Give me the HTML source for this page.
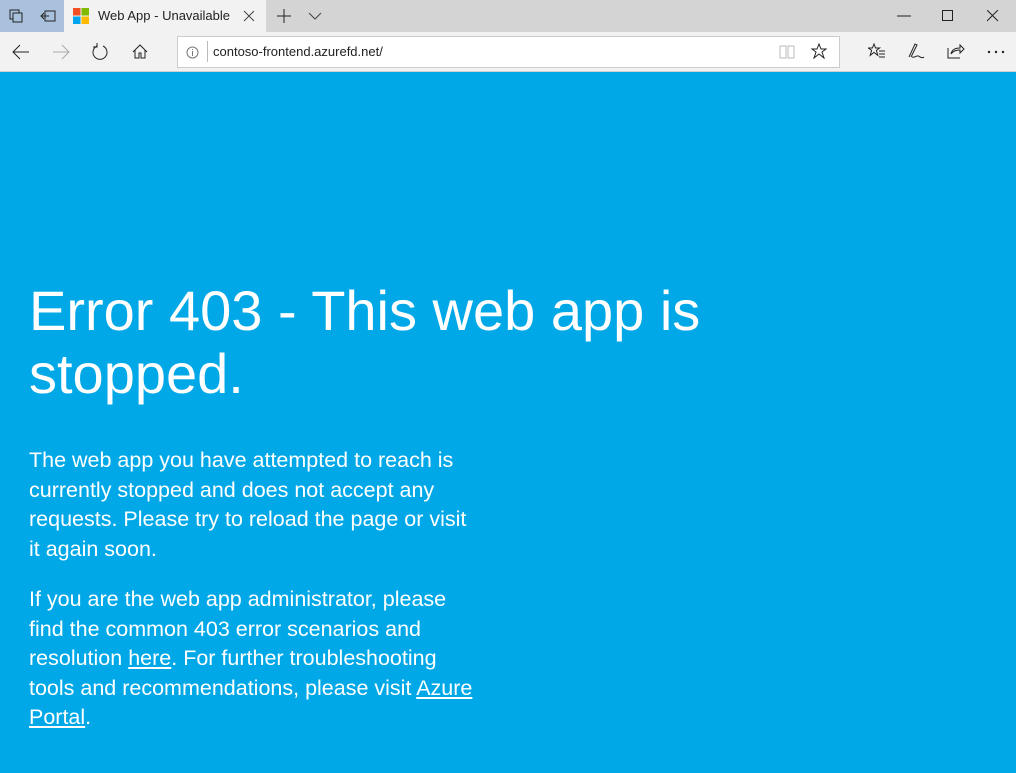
<!DOCTYPE html>
<html><head><meta charset="utf-8"><style>
*{margin:0;padding:0;box-sizing:border-box}
body{width:1016px;height:773px;overflow:hidden;background:#00a8e8;font-family:"Liberation Sans",sans-serif;position:relative}
.tabbar{position:absolute;left:0;top:0;width:1016px;height:32px;background:#d4d4d4}
.lb{position:absolute;left:0;top:0;width:64px;height:32px;background:#a9c1dc}
.tab{position:absolute;left:64px;top:0;width:202px;height:32px;background:#f2f2f2}
.tb{position:absolute;left:0;top:32px;width:1016px;height:40px;background:#f2f2f2;border-bottom:1px solid #d0d0d0}
.addr{position:absolute;left:177px;top:36px;width:663px;height:32px;background:#fff;border:1px solid #ccc}
.t{position:absolute;color:#222;font-size:13px}
svg{position:absolute}
h1{position:absolute;left:29px;top:279px;color:#fff;font-weight:normal;font-size:56px;line-height:63px;letter-spacing:0;white-space:nowrap}
p{position:absolute;left:29px;color:#fff;font-size:21.5px;line-height:29.5px;white-space:nowrap}
a{color:#fff;text-decoration:underline}
</style></head><body>
<div class="tabbar"></div><div class="lb"></div><div class="tab"></div>
<svg style="left:9px;top:9px" width="14" height="14"><rect x="1" y="1" width="9" height="9" fill="none" stroke="#222"/><rect x="4" y="4" width="9" height="9" fill="#a9c1dc" stroke="#222"/></svg>
<svg style="left:40px;top:9px" width="16" height="14"><rect x="5" y="2" width="10" height="10" fill="none" stroke="#222"/><path d="M1 7h8M4 4l-3 3 3 3" fill="none" stroke="#222"/></svg>
<svg style="left:73px;top:8px" width="16" height="16"><rect x="0" y="0" width="7.5" height="7.5" fill="#f25022"/><rect x="8.5" y="0" width="7.5" height="7.5" fill="#7fba00"/><rect x="0" y="8.5" width="7.5" height="7.5" fill="#00a4ef"/><rect x="8.5" y="8.5" width="7.5" height="7.5" fill="#ffb900"/></svg>
<div class="t" style="left:98px;top:8px;font-size:13px">Web App - Unavailable</div>
<svg style="left:243px;top:10px" width="12" height="12"><path d="M1 1l10 10M11 1L1 11" stroke="#444"/></svg>
<svg style="left:276px;top:8px" width="16" height="16"><path d="M8 1v14M1 8h14" stroke="#222"/></svg>
<svg style="left:308px;top:11px" width="14" height="10"><path d="M1 2l6 6 6-6" fill="none" stroke="#444"/></svg>
<svg style="left:897px;top:15px" width="14" height="2"><path d="M0 1h14" stroke="#222"/></svg>
<svg style="left:942px;top:10px" width="12" height="12"><rect x="0.5" y="0.5" width="10" height="10" fill="none" stroke="#222"/></svg>
<svg style="left:987px;top:10px" width="12" height="12"><path d="M0 0l11 11M11 0L0 11" stroke="#222"/></svg>
<div class="tb"></div><div class="addr"></div>
<svg style="left:12px;top:44px" width="18" height="16"><path d="M1 8h16M8 1L1 8l7 7" fill="none" stroke="#222"/></svg>
<svg style="left:52px;top:44px" width="18" height="16"><path d="M1 8h16M10 1l7 7-7 7" fill="none" stroke="#aaa"/></svg>
<svg style="left:91px;top:43px" width="18" height="18"><path d="M12 3A7 7 0 1 1 6 3M6 0v4H2" fill="none" stroke="#222"/></svg>
<svg style="left:132px;top:44px" width="16" height="16"><path d="M1 8L8 1l7 7M3 6v8h4v-5h2v5h4V6" fill="none" stroke="#222"/></svg>
<svg style="left:186px;top:46px" width="13" height="13"><circle cx="6.5" cy="6.5" r="5.5" fill="none" stroke="#777"/><path d="M6.5 5v5M6.5 3v1" stroke="#777"/></svg>
<div style="position:absolute;left:207px;top:41px;width:1px;height:21px;background:#bbb"></div>
<div class="t" style="left:213px;top:44px">contoso-frontend.azurefd.net/</div>
<svg style="left:779px;top:44px" width="16" height="15"><path d="M1 2h6v12H1zM9 2h6v12H9z" fill="none" stroke="#bbb"/></svg>
<svg style="left:811px;top:43px" width="16" height="16"><path d="M8 1l2 5h5l-4 3 2 6-5-4-5 4 2-6-4-3h5z" fill="none" stroke="#222"/></svg>
<svg style="left:868px;top:43px" width="18" height="16"><path d="M6 1l1.6 4h4l-3.2 2.4 1.4 5-3.8-3-3.8 3 1.4-5L0.4 5h4z" fill="none" stroke="#222"/><path d="M11 8h6M11 11h6M11 14h6" stroke="#222"/></svg>
<svg style="left:907px;top:42px" width="18" height="18"><path d="M2 15L8 2l2 1-6 12M5 15c4 1 5-3 8 0 2 1 3 1 4 0" fill="none" stroke="#222"/></svg>
<svg style="left:947px;top:43px" width="18" height="16"><path d="M1 5v10h12M4 11c1-5 5-6 9-6V2l4 4-4 4V7c-4 0-7 1-9 4z" fill="none" stroke="#222"/></svg>
<svg style="left:987px;top:50px" width="18" height="4"><circle cx="2" cy="2" r="1.2" fill="#222"/><circle cx="9" cy="2" r="1.2" fill="#222"/><circle cx="16" cy="2" r="1.2" fill="#222"/></svg>
<h1>Error 403 - This web app is<br>stopped.</h1>
<p style="top:446px">The web app you have attempted to reach is<br>currently stopped and does not accept any<br>requests. Please try to reload the page or visit<br>it again soon.</p>
<p style="top:585px">If you are the web app administrator, please<br>find the common 403 error scenarios and<br>resolution <a>here</a>. For further troubleshooting<br>tools and recommendations, please visit <a>Azure<br>Portal</a>.</p>
</body></html>
